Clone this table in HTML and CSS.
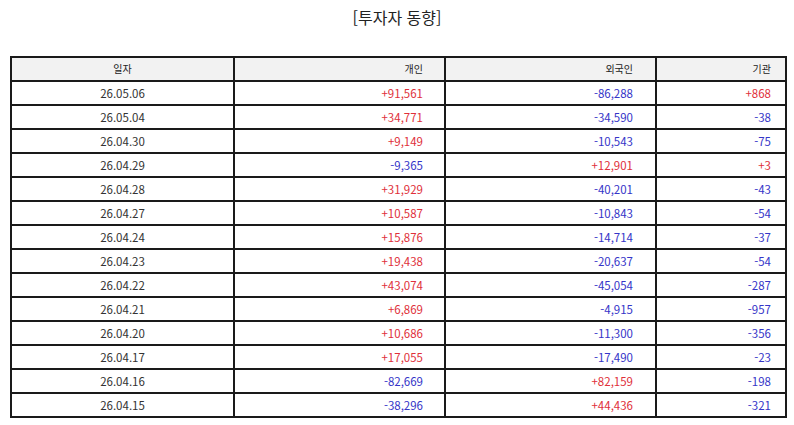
FILE: index.html
```html
<!DOCTYPE html>
<html lang="ko">
<head>
<meta charset="utf-8">
<link rel="stylesheet" href="styles.css">
</head>
<body>
<div class="page">
  <h1 class="title">[투자자 동향]</h1>
  <table class="trend">
    <colgroup>
      <col class="c-date"><col class="c-ind"><col class="c-for"><col class="c-ins">
    </colgroup>
    <thead>
      <tr><th class="date">일자</th><th class="ind">개인</th><th class="for">외국인</th><th class="ins">기관</th></tr>
    </thead>
    <tbody>
      <tr><td class="date">26.05.06</td><td class="ind up">+91,561</td><td class="for down">-86,288</td><td class="ins up">+868</td></tr>
      <tr><td class="date">26.05.04</td><td class="ind up">+34,771</td><td class="for down">-34,590</td><td class="ins down">-38</td></tr>
      <tr><td class="date">26.04.30</td><td class="ind up">+9,149</td><td class="for down">-10,543</td><td class="ins down">-75</td></tr>
      <tr><td class="date">26.04.29</td><td class="ind down">-9,365</td><td class="for up">+12,901</td><td class="ins up">+3</td></tr>
      <tr><td class="date">26.04.28</td><td class="ind up">+31,929</td><td class="for down">-40,201</td><td class="ins down">-43</td></tr>
      <tr><td class="date">26.04.27</td><td class="ind up">+10,587</td><td class="for down">-10,843</td><td class="ins down">-54</td></tr>
      <tr><td class="date">26.04.24</td><td class="ind up">+15,876</td><td class="for down">-14,714</td><td class="ins down">-37</td></tr>
      <tr><td class="date">26.04.23</td><td class="ind up">+19,438</td><td class="for down">-20,637</td><td class="ins down">-54</td></tr>
      <tr><td class="date">26.04.22</td><td class="ind up">+43,074</td><td class="for down">-45,054</td><td class="ins down">-287</td></tr>
      <tr><td class="date">26.04.21</td><td class="ind up">+6,869</td><td class="for down">-4,915</td><td class="ins down">-957</td></tr>
      <tr><td class="date">26.04.20</td><td class="ind up">+10,686</td><td class="for down">-11,300</td><td class="ins down">-356</td></tr>
      <tr><td class="date">26.04.17</td><td class="ind up">+17,055</td><td class="for down">-17,490</td><td class="ins down">-23</td></tr>
      <tr><td class="date">26.04.16</td><td class="ind down">-82,669</td><td class="for up">+82,159</td><td class="ins down">-198</td></tr>
      <tr><td class="date">26.04.15</td><td class="ind down">-38,296</td><td class="for up">+44,436</td><td class="ins down">-321</td></tr>
    </tbody>
  </table>
</div>
</body>
</html>
```
FILE: styles.css
```css
html, body {
  margin: 0;
  padding: 0;
  background: #ffffff;
}
.page {
  width: 794px;
  font-family: "Noto Sans CJK KR", "Noto Sans", sans-serif;
  color: #333333;
}
.title {
  margin: 0;
  height: 56px;
  padding-top: 5px;
  box-sizing: border-box;
  text-align: center;
  font-size: 16px;
  font-weight: normal;
  line-height: 24px;
  color: #222222;
}
.trend {
  margin-left: 10px;
  width: 775px;
  border-collapse: collapse;
  table-layout: fixed;
  font-size: 11.5px;
}
.c-date { width: 223px; }
.c-ind { width: 211px; }
.c-for { width: 211px; }
.c-ins { width: 130px; }
.trend th, .trend td {
  border: 2px solid #1a1a1a;
  height: 22px;
  padding: 0;
  line-height: 22px;
  white-space: nowrap;
}
.trend th {
  background: #f2f2f2;
  font-weight: normal;
  font-size: 10px;
  color: #222222;
}
.date { text-align: center; }
.ind { text-align: right; padding-right: 21px !important; }
.for { text-align: right; padding-right: 22px !important; }
.ins { text-align: right; padding-right: 14px !important; }
.up { color: #e0303a; }
.down { color: #3535c8; }
```
